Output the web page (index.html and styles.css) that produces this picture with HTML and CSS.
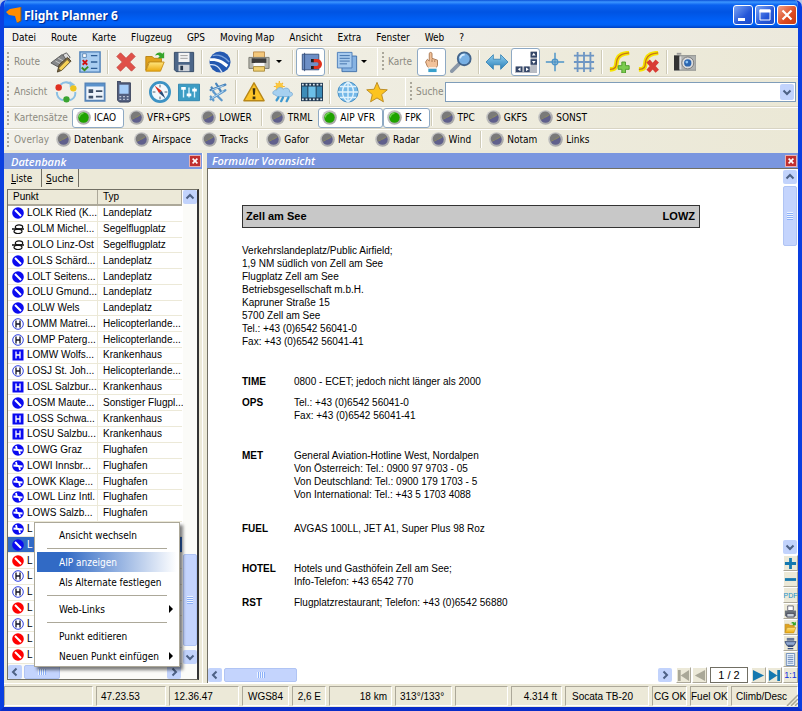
FILE: index.html
```html
<!DOCTYPE html>
<html lang="de">
<head>
    <meta charset="UTF-8">
    <meta name="viewport" content="width=device-width, initial-scale=1.0">
    <title>Flight Planner 6</title>
    <link rel="stylesheet" href="styles.css">
</head>
<body>
    <!-- Shared symbols -->
    <svg class="defs" width="0" height="0" aria-hidden="true">
        <defs>
            <linearGradient id="g-led" x1="0" y1="0" x2="1" y2="1">
                <stop offset="0" stop-color="#cccccc"/><stop offset="1" stop-color="#a0a0a0"/>
            </linearGradient>
            <linearGradient id="g-blue" x1="0" y1="0" x2="0" y2="1">
                <stop offset="0" stop-color="#8fd0f0"/><stop offset="1" stop-color="#2a7fb8"/>
            </linearGradient>
            <linearGradient id="g-yellow" x1="0" y1="0" x2="0" y2="1">
                <stop offset="0" stop-color="#ffe680"/><stop offset="1" stop-color="#eda90c"/>
            </linearGradient>
        </defs>
        <symbol id="led-off" viewBox="0 0 16 16">
            <circle cx="8" cy="8" r="7.8" fill="url(#g-led)"/>
            <circle cx="8" cy="8" r="5.6" fill="#60608c"/>
            <path d="M2.400 9.500A5.600 5.600 0 0 1 12.600 4.800L9 7.600 6 8z" fill="#7a7a7a"/>
            <path d="M3 10l4-2 5.500-3" stroke="#8c8a60" fill="none"/>
        </symbol>
        <symbol id="led-on" viewBox="0 0 16 16">
            <circle cx="8" cy="8" r="7.8" fill="url(#g-led)"/>
            <circle cx="8" cy="8" r="5.6" fill="#1fa300"/>
            <path d="M3.500 8A4.500 4.500 0 0 1 8 3.500" stroke="#6fd050" stroke-width="1.500" fill="none"/>
        </symbol>
        <symbol id="field" viewBox="0 0 12 12">
            <circle cx="6" cy="6" r="5.8" fill="#0a0af0"/>
            <path d="M3 3l6 6" stroke="#fff" stroke-width="2"/>
        </symbol>
        <symbol id="closed" viewBox="0 0 12 12">
            <circle cx="6" cy="6" r="5.8" fill="#f00"/>
            <path d="M3 3l6 6" stroke="#fff" stroke-width="2"/>
        </symbol>
        <symbol id="airport" viewBox="0 0 12 12">
            <circle cx="6" cy="6" r="5.8" fill="#0a0af0"/>
            <path d="M1.500 5.500L5 6 4 2M10.500 6.500L7 6 8 10M5 6h2" stroke="#fff" stroke-width="1.800" fill="none"/>
        </symbol>
        <symbol id="glider" viewBox="0 0 12 12">
            <path d="M0 6h12" stroke="#111" stroke-width="1.300"/>
            <ellipse cx="7" cy="4" rx="3.700" ry="2.200" fill="none" stroke="#111" stroke-width="1.200"/>
            <ellipse cx="6" cy="8.300" rx="4" ry="2.200" fill="none" stroke="#111" stroke-width="1.200"/>
        </symbol>
        <symbol id="heli" viewBox="0 0 12 12">
            <circle cx="6" cy="6" r="5.3" fill="#fff" stroke="#3040e0"/>
            <path d="M4 2.500v7M8 2.500v7M4 6h4" stroke="#112" stroke-width="1.300" fill="none"/>
        </symbol>
        <symbol id="hospital" viewBox="0 0 12 12">
            <path d="M0.500 0.500h11v11h-11z" fill="#0a0af0"/>
            <path d="M4 2.500v7M8 2.500v7M4 6h4" stroke="#fff" stroke-width="1.300" fill="none"/>
        </symbol>
        <symbol id="chev-left" viewBox="0 0 10 10"><path d="M6.500 1.500L3 5l3.500 3.500" fill="none" stroke="#4d6185" stroke-width="2"/></symbol>
        <symbol id="chev-right" viewBox="0 0 10 10"><path d="M3.500 1.500L7 5 3.500 8.500" fill="none" stroke="#4d6185" stroke-width="2"/></symbol>
        <symbol id="chev-up" viewBox="0 0 10 10"><path d="M1.500 6.500L5 3l3.500 3.500" fill="none" stroke="#4d6185" stroke-width="2"/></symbol>
        <symbol id="chev-down" viewBox="0 0 10 10"><path d="M1.500 3.500L5 7l3.500-3.500" fill="none" stroke="#4d6185" stroke-width="2"/></symbol>
        <symbol id="cross" viewBox="0 0 10 10"><path d="M2 2l6 6M8 2L2 8" fill="none" stroke="#fff" stroke-width="2"/></symbol>
        <symbol id="folder" viewBox="0 0 24 24">
            <path d="M2 6h7l2 2h8v4H5l-3 9z" fill="#e0a21c" stroke="#b98212"/>
            <path d="M6 12h16l-4 10H2z" fill="url(#g-yellow)" stroke="#c89018"/>
            <path d="M12 5c2-4 6-4 8-2l2-2v7h-7l2-2c-1-2-3-2-5-1z" fill="#36a52c"/>
        </symbol>
    </svg>

    <div class="window">
        <header class="titlebar">
            <svg class="app-logo" viewBox="0 0 16 16"><path d="M0 5L4 2 15 0V14L11 16 9 9 3 8z" fill="#ff8c00"/><path d="M15 0V14L11 16" fill="none" stroke="#7a5a30"/></svg>
            <h1>Flight Planner 6</h1>
            <button class="win-button" aria-label="Minimieren"><svg viewBox="0 0 18 18"><path d="M4 12h7v3H4z" fill="#fff"/></svg></button>
            <button class="win-button" aria-label="Maximieren"><svg viewBox="0 0 18 18"><path d="M4 4h10v10H4z" fill="none" stroke="#fff"/><path d="M3.500 3.500h11v3h-11z" fill="#fff"/></svg></button>
            <button class="win-button close" aria-label="Schließen"><svg viewBox="0 0 18 18"><path d="M4.500 4.500l9 9M13.500 4.500l-9 9" stroke="#fff" stroke-width="2.200"/></svg></button>
        </header>

        <nav class="menubar">
            <button>Datei</button>
            <button>Route</button>
            <button>Karte</button>
            <button>Flugzeug</button>
            <button>GPS</button>
            <button>Moving Map</button>
            <button>Ansicht</button>
            <button>Extra</button>
            <button>Fenster</button>
            <button>Web</button>
            <button>?</button>
        </nav>

        <div class="toolbar-row tall">
            <div class="toolbar first route">
                <span class="grip"></span><span class="label">Route</span>
                <button class="tool" aria-label="Route bearbeiten"><svg viewBox="0 0 24 24"><path d="M1 13L13 4l6 3-9 11z" fill="#86888a" stroke="#555"/><path d="M6 11l6 3M9 8l6 3" stroke="#ccc"/><path d="M14 4l4-2 4 5-4 3z" fill="#ddd" stroke="#555"/><path d="M8 23l2-8 9-8 4 4-10 10z" fill="#7b6840" stroke="#4c3f26"/><path d="M11 20l9-9" stroke="#f6d256" stroke-width="3.500"/></svg></button>
                <button class="tool" aria-label="Checkliste"><svg viewBox="0 0 24 24"><path d="M1 1h22v22H1z" fill="#a9cdf0" stroke="#4b7fb8" stroke-width="1.500"/><path d="M4 3h4v4H4z" fill="#fff" stroke="#5a86b4"/><path d="M4 10l5 5M9 10l-5 5" stroke="#d01010" stroke-width="2"/><path d="M3 18l3 3 4-4" stroke="#3a8a20" stroke-width="2" fill="none"/><path d="M13 5h7M13 12h7M13 19h7" stroke="#2e5d94" stroke-width="1.500"/></svg></button>
                <span class="sep"></span>
                <button class="tool" aria-label="Löschen"><svg viewBox="0 0 24 24"><path d="M6 2l6 6 6-6 4 4-6 6 6 6-4 4-6-6-6 6-4-4 6-6-6-6z" fill="#e05048" stroke="#c8524a"/></svg></button>
                <button class="tool" aria-label="Öffnen"><svg viewBox="0 0 24 24"><use href="#folder"/></svg></button>
                <button class="tool" aria-label="Speichern"><svg viewBox="0 0 24 24"><path d="M1.500 1.500h21v21h-19l-2-2z" fill="#4c6688" stroke="#2f4562"/><path d="M6 2h12v10H6z" fill="#f4f4f4"/><path d="M8 5h8M8 8h8" stroke="#999"/><path d="M6 15h12v7H6z" fill="#d0d4da"/><path d="M8 16h3v5H8z" fill="#26364c"/></svg></button>
                <span class="sep"></span>
                <button class="tool" aria-label="Google Earth"><svg viewBox="0 0 24 24"><circle cx="12" cy="12" r="11.500" fill="#2458b0"/><path d="M1 8c7-1 15 2 20 7l-2 3C14 13 8 10 1 11z" fill="#fff"/><path d="M4 5c7-2 14 2 18 7" stroke="#7ea4dc" stroke-width="1.500" fill="none"/><path d="M1 15c6-1 10 2 13 8" stroke="#d4e2f6" stroke-width="1.500" fill="none"/></svg></button>
                <span class="sep"></span>
                <button class="tool drop" aria-label="Drucken"><svg viewBox="0 0 24 24"><path d="M6 1h12v8H6z" fill="#f3c77a" stroke="#b98a4a"/><path d="M1 7h22v12H1z" fill="#b6b6ae" stroke="#77776f"/><path d="M4 8h16v5H4z" fill="#3c3c3c"/><path d="M6 13h12v4H6z" fill="#f8f8f8"/><path d="M6 17h12v5H6z" fill="#f2d070" stroke="#a98a3a"/></svg><span class="arrow"></span></button>
                <span class="sep"></span>
                <button class="tool on" aria-label="Fangmodus"><svg viewBox="0 0 24 24"><path d="M2.500 3.500h18v17h-18z" fill="#6d8fc6" stroke="#334e7c"/><path d="M5 2v20" stroke="#334e7c"/><path d="M14 10.500h4.500a3.700 3.700 0 0 1 0 7.500H14" fill="none" stroke="#e0301c" stroke-width="3.500"/><path d="M12 10.500h3M12 18h3" stroke="#222" stroke-width="3.500"/></svg></button>
                <span class="sep"></span>
                <button class="tool drop pages" aria-label="Dokumente"><svg viewBox="0 0 24 24"><path d="M6.500 5.500h16v17h-16z" fill="#87b3e2" stroke="#3e6ea8"/><path d="M1.500 1.500h16v17h-16z" fill="#a8cbee" stroke="#4a7cb8"/><path d="M4 5h11M4 8h11M4 11h11M4 14h8" stroke="#3e6ea8"/></svg><span class="arrow"></span></button>
            </div>
            <div class="toolbar">
                <span class="grip"></span><span class="label">Karte</span>
                <button class="tool on" aria-label="Verschieben"><svg viewBox="0 0 24 24"><path d="M7 17L5 12l2-3 2 2V3c0-2 3-2 3 0v5l6 2v6l-2 3H9z" fill="#f2c29a" stroke="#a97650"/><path d="M12 9v3M15 10v2" stroke="#a97650"/><path d="M8 19h9v4H8z" fill="#38a0cc"/><path d="M8 18.500h9" stroke="#fff" stroke-width="1.500"/></svg></button>
                <button class="tool" aria-label="Zoom"><svg viewBox="0 0 24 24"><path d="M2 22l8-8" stroke="#8b98a8" stroke-width="4" stroke-linecap="round"/><circle cx="15.500" cy="8.500" r="7" fill="#78b0e4" stroke="#43658c" stroke-width="2"/><path d="M11 8a5 5 0 0 1 5-4" stroke="#d6ecff" stroke-width="2" fill="none"/></svg></button>
                <span class="sep"></span>
                <button class="tool" aria-label="Breite"><svg viewBox="0 0 24 24"><path d="M0 12l8-8v5h8V4l8 8-8 8v-5H8v5z" fill="url(#g-blue)" stroke="#3c88b8"/></svg></button>
                <button class="tool on" aria-label="Rollbalken"><svg viewBox="0 0 24 24"><path d="M17 0h7v24H0v-7h17z" fill="#b8bcc4"/><path d="M17 1h7v6h-7zM17 9h7v6h-7zM1 17h7v6H1zM10 17h6v6h-6z" fill="#344668"/><path d="M18.500 5l2-3 2 3zM18.500 11l2 3 2-3zM6 18l-3 2 3 2zM12 18l3 2-3 2z" fill="#fff"/></svg></button>
                <button class="tool" aria-label="Zentrieren"><svg viewBox="0 0 24 24"><path d="M12 2v20M2 12h20" stroke="#4c94c8" stroke-width="1.600"/><circle cx="12" cy="12" r="3" fill="none" stroke="#4c94c8" stroke-width="1.600"/></svg></button>
                <button class="tool" aria-label="Raster"><svg viewBox="0 0 24 24"><path d="M5 1v22M12 1v22M19 1v22M1 5h22M1 12h22M1 19h22" stroke="#6e96c4" stroke-width="2"/></svg></button>
                <span class="sep"></span>
                <button class="tool" aria-label="Strecke hinzufügen"><svg viewBox="0 0 24 24"><path d="M1 20c9 0 6-6 8-11s6-6 13-7" fill="none" stroke="#f6e400" stroke-width="5"/><path d="M1 20c9 0 6-6 8-11s6-6 13-7" fill="none" stroke="#c87818" stroke-width="1.500"/><path d="M14 12h4v4h4v4h-4v4h-4v-4h-4v-4h4z" fill="#7ccc50" stroke="#4a9828"/></svg></button>
                <button class="tool" aria-label="Strecke löschen"><svg viewBox="0 0 24 24"><path d="M1 20c9 0 6-6 8-11s6-6 13-7" fill="none" stroke="#f6e400" stroke-width="5"/><path d="M1 20c9 0 6-6 8-11s6-6 13-7" fill="none" stroke="#c87818" stroke-width="1.500"/><path d="M11 11l10 11M21 11L11 22" stroke="#d83c34" stroke-width="5"/></svg></button>
                <span class="sep"></span>
                <button class="tool" aria-label="Bildschirmfoto"><svg viewBox="0 0 24 24"><path d="M0 5h24v16H0z" fill="#b0b2b0" stroke="#8e908e"/><path d="M0 5h6v16H0z" fill="#333"/><path d="M3 2h5v2H3z" fill="#999"/><path d="M7 6v14" stroke="#ddd" stroke-width="2"/><circle cx="15" cy="13" r="6.500" fill="#dcdcdc" stroke="#777"/><circle cx="15" cy="13" r="4" fill="#2c66b0"/><circle cx="14" cy="12" r="1.500" fill="#8cc4f4"/></svg></button>
            </div>
        </div>

        <div class="toolbar-row tall">
            <div class="toolbar first ansicht">
                <span class="grip"></span><span class="label">Ansicht</span>
                <button class="tool" aria-label="Aktualisieren"><svg viewBox="0 0 24 24"><path d="M6 4c4-4 10-3 13 1M22 12c1 5-3 8-6 9M9 21c-5-1-7-4-7-9" fill="none" stroke="#8cc0e4" stroke-width="2.200"/><path d="M16 0v7l6-3z" fill="#8cc0e4"/><circle cx="4" cy="7" r="3.500" fill="#e03020"/><circle cx="20" cy="8" r="3.500" fill="#ecc420"/><circle cx="12.500" cy="20" r="3.500" fill="#3aa430"/></svg></button>
                <button class="tool" aria-label="Formular"><svg viewBox="0 0 24 24"><path d="M1.500 2.500h21v19h-21z" fill="#eef4fb" stroke="#5684b8" stroke-width="2"/><path d="M2 3h20v3H2z" fill="#5a92cc"/><path d="M5 9h5v4H5zM5 16h5v3H5z" fill="#3c4f68"/><path d="M13 11h7M13 17h7" stroke="#3c4f68" stroke-width="2"/></svg></button>
                <button class="tool" aria-label="Mobilgerät"><svg viewBox="0 0 24 24"><path d="M5 0h3v2h11v20l-2 1H7l-2-2z" fill="#536080" stroke="#343e58"/><path d="M7 4h10v10H7z" fill="#a4ccf8"/><path d="M7 17h10M7 20h10" stroke="#c0c8d8" stroke-dasharray="2 2" stroke-width="1.500"/></svg></button>
                <span class="sep"></span>
                <button class="tool" aria-label="Kompass"><svg viewBox="0 0 24 24"><circle cx="12" cy="12" r="10.500" fill="#f4f8fc" stroke="#3c92c4" stroke-width="3"/><path d="M12 4v3M12 17v3M4 12h3M17 12h3" stroke="#456"/><path d="M6 5l8 6-3 2z" fill="#d8281c"/><path d="M18 19l-4-8-3 2z" fill="#274c78"/></svg></button>
                <button class="tool" aria-label="Einstellungen"><svg viewBox="0 0 24 24"><path d="M0.500 3.500h23v18h-23z" fill="#3c9cc4" stroke="#2c82ac"/><path d="M6 7v11M12 7v11M18 7v11" stroke="#d8f0fc" stroke-width="1.500"/><path d="M3.500 8h5M9.500 15h5M15.500 10h5" stroke="#fff" stroke-width="3"/></svg></button>
                <button class="tool" aria-label="Flugzeuge"><svg viewBox="0 0 24 24"><path d="M4 10l16-6M10 3l5 8M5 7l2 4" stroke="#4a86be" stroke-width="2.500" stroke-linecap="round"/><path d="M4 20L20 10M7 12l9 9M4 17l3 4" stroke="#5c98cc" stroke-width="2.500" stroke-linecap="round"/><path d="M5 10l13-5M5 19l13-8" stroke="#c8e2f4"/></svg></button>
                <span class="sep"></span>
                <button class="tool" aria-label="Warnungen"><svg viewBox="0 0 24 24"><path d="M12 2l11 19.500H1z" fill="#fcc428" stroke="#b88818" stroke-linejoin="round" stroke-width="1.500"/><path d="M10.500 8h3l-.5 7h-2zM10.500 17h3v3h-3z" fill="#3c3010"/></svg></button>
                <button class="tool" aria-label="Wetter"><svg viewBox="0 0 24 24"><path d="M8 0v12M2 6h12M4 2l8 8M12 2L4 10" stroke="#f4b430" stroke-width="1.300"/><circle cx="8" cy="6" r="4" fill="#fcc840"/><path d="M3 15c-3 0-3-5 2-5 1-4 7-3 7-1 4-3 8 0 7 3 5 0 4 5 0 5H6z" fill="#a6d0f0" stroke="#80b0d8"/><path d="M7 18l-2 3M12 18l-2 4M18 18l-2 4" stroke="#3c98d0" stroke-width="2.500" stroke-linecap="round"/></svg></button>
                <button class="tool" aria-label="Film"><svg viewBox="0 0 24 24"><path d="M0 2h24v20H0z" fill="#203850"/><path d="M1 6h6v12H1zM17 6h6v12h-6z" fill="#3c8cb8"/><path d="M8 6h8v12H8z" fill="#6cc0e8"/><path d="M1 4h22M1 20h22" stroke="#dce8f0" stroke-width="2" stroke-dasharray="2 2"/></svg></button>
                <span class="sep"></span>
                <button class="tool" aria-label="Internet"><svg viewBox="0 0 24 24"><circle cx="12" cy="12" r="11" fill="#74b8e8" stroke="#3c88c0"/><path d="M12 1v22M1 12h22M3 6h18M3 18h18M12 1c-8 6-8 16 0 22M12 1c8 6 8 16 0 22" fill="none" stroke="#e0f2fc" stroke-width="1.500"/></svg></button>
                <button class="tool" aria-label="Favoriten"><svg viewBox="0 0 24 24"><path d="M12 1.500l3.200 7.500 8 .6-6.100 5.200 1.900 7.900L12 18.500l-7 4.200 1.900-7.900L.8 9.600l8-.6z" fill="#fcc420" stroke="#b88820"/></svg></button>
            </div>
            <div class="toolbar grow">
                <span class="grip"></span><label class="label" for="suche">Suche</label>
                <div class="combo">
                    <select id="suche"><option></option></select>
                    <span class="combo-arrow"><svg viewBox="0 0 10 10"><use href="#chev-down"/></svg></span>
                </div>
            </div>
        </div>

        <div class="toolbar-row">
            <div class="toolbar first kartensaetze">
                <span class="grip"></span><span class="label">Kartensätze</span>
                <button class="toggle on"><svg><use href="#led-on"/></svg>ICAO</button>
                <button class="toggle"><svg><use href="#led-off"/></svg>VFR+GPS</button>
                <button class="toggle"><svg><use href="#led-off"/></svg>LOWER</button>
                <span class="sep"></span>
                <button class="toggle"><svg><use href="#led-off"/></svg>TRML</button>
                <button class="toggle on"><svg><use href="#led-on"/></svg>AIP VFR</button>
                <button class="toggle on"><svg><use href="#led-on"/></svg>FPK</button>
                <span class="sep"></span>
                <button class="toggle"><svg><use href="#led-off"/></svg>TPC</button>
                <button class="toggle"><svg><use href="#led-off"/></svg>GKFS</button>
                <button class="toggle"><svg><use href="#led-off"/></svg>SONST</button>
            </div>
        </div>

        <div class="toolbar-row">
            <div class="toolbar first overlay">
                <span class="grip"></span><span class="label">Overlay</span>
                <button class="toggle"><svg><use href="#led-off"/></svg>Datenbank</button>
                <button class="toggle"><svg><use href="#led-off"/></svg>Airspace</button>
                <button class="toggle"><svg><use href="#led-off"/></svg>Tracks</button>
                <span class="sep"></span>
                <button class="toggle"><svg><use href="#led-off"/></svg>Gafor</button>
                <button class="toggle"><svg><use href="#led-off"/></svg>Metar</button>
                <button class="toggle"><svg><use href="#led-off"/></svg>Radar</button>
                <button class="toggle"><svg><use href="#led-off"/></svg>Wind</button>
                <span class="sep"></span>
                <button class="toggle"><svg><use href="#led-off"/></svg>Notam</button>
                <button class="toggle"><svg><use href="#led-off"/></svg>Links</button>
            </div>
        </div>

        <main class="workspace">
            <section class="database">
                <div class="panel-title">
                    <h2>Datenbank</h2>
                    <button class="panel-close" aria-label="Schließen"><svg viewBox="0 0 10 10"><use href="#cross"/></svg></button>
                </div>
                <div class="tabs">
                    <button class="tab active"><u>L</u>iste</button>
                    <button class="tab"><u>S</u>uche</button>
                </div>
                <div class="list-frame">
                    <div class="list-main">
                        <table class="points">
                            <thead>
                                <tr><th class="col-point">Punkt</th><th>Typ</th></tr>
                            </thead>
                            <tbody>
                                <tr><td><svg><use href="#field"/></svg>LOLK Ried (K...</td><td>Landeplatz</td></tr>
                                <tr><td><svg><use href="#glider"/></svg>LOLM Michel...</td><td>Segelflugplatz</td></tr>
                                <tr><td><svg><use href="#glider"/></svg>LOLO Linz-Ost</td><td>Segelflugplatz</td></tr>
                                <tr><td><svg><use href="#field"/></svg>LOLS Schärd...</td><td>Landeplatz</td></tr>
                                <tr><td><svg><use href="#field"/></svg>LOLT Seitens...</td><td>Landeplatz</td></tr>
                                <tr><td><svg><use href="#field"/></svg>LOLU Gmund...</td><td>Landeplatz</td></tr>
                                <tr><td><svg><use href="#field"/></svg>LOLW Wels</td><td>Landeplatz</td></tr>
                                <tr><td><svg><use href="#heli"/></svg>LOMM Matrei...</td><td>Helicopterlande...</td></tr>
                                <tr><td><svg><use href="#heli"/></svg>LOMP Paterg...</td><td>Helicopterlande...</td></tr>
                                <tr><td><svg><use href="#hospital"/></svg>LOMW Wolfs...</td><td>Krankenhaus</td></tr>
                                <tr><td><svg><use href="#heli"/></svg>LOSJ St. Joh...</td><td>Helicopterlande...</td></tr>
                                <tr><td><svg><use href="#hospital"/></svg>LOSL Salzbur...</td><td>Krankenhaus</td></tr>
                                <tr><td><svg><use href="#field"/></svg>LOSM Maute...</td><td>Sonstiger Flugpl...</td></tr>
                                <tr><td><svg><use href="#hospital"/></svg>LOSS Schwa...</td><td>Krankenhaus</td></tr>
                                <tr><td><svg><use href="#hospital"/></svg>LOSU Salzbu...</td><td>Krankenhaus</td></tr>
                                <tr><td><svg><use href="#airport"/></svg>LOWG Graz</td><td>Flughafen</td></tr>
                                <tr><td><svg><use href="#airport"/></svg>LOWI Innsbr...</td><td>Flughafen</td></tr>
                                <tr><td><svg><use href="#airport"/></svg>LOWK Klage...</td><td>Flughafen</td></tr>
                                <tr><td><svg><use href="#airport"/></svg>LOWL Linz Intl.</td><td>Flughafen</td></tr>
                                <tr><td><svg><use href="#airport"/></svg>LOWS Salzb...</td><td>Flughafen</td></tr>
                                <tr><td><svg><use href="#airport"/></svg>L</td><td></td></tr>
                                <tr class="selected"><td><svg><use href="#field"/></svg>L</td><td></td></tr>
                                <tr><td><svg><use href="#closed"/></svg>L</td><td></td></tr>
                                <tr><td><svg><use href="#heli"/></svg>L</td><td></td></tr>
                                <tr><td><svg><use href="#heli"/></svg>L</td><td></td></tr>
                                <tr><td><svg><use href="#closed"/></svg>L</td><td></td></tr>
                                <tr><td><svg><use href="#heli"/></svg>L</td><td></td></tr>
                                <tr><td><svg><use href="#closed"/></svg>L</td><td></td></tr>
                                <tr><td><svg><use href="#closed"/></svg>L</td><td></td></tr>
                            </tbody>
                        </table>
                        <div class="scroll-v list-scroll">
                            <button class="scroll-button" aria-label="Nach oben"><svg><use href="#chev-up"/></svg></button>
                            <div class="scroll-thumb"></div>
                            <button class="scroll-button" aria-label="Nach unten"><svg><use href="#chev-down"/></svg></button>
                        </div>
                    </div>
                    <div class="scroll-h list-bottom">
                        <button class="scroll-button" aria-label="Nach links"><svg><use href="#chev-left"/></svg></button>
                        <div class="scroll-thumb"></div>
                        <button class="scroll-button end" aria-label="Nach rechts"><svg><use href="#chev-right"/></svg></button>
                    </div>
                </div>
            </section>

            <section class="preview">
                <div class="panel-title">
                    <h2>Formular Voransicht</h2>
                    <button class="panel-close" aria-label="Schließen"><svg viewBox="0 0 10 10"><use href="#cross"/></svg></button>
                </div>
                <div class="preview-body">
                    <div class="page-column">
                        <article class="page">
                            <div class="page-head"><span>Zell am See</span><span>LOWZ</span></div>
                            <p class="address">Verkehrslandeplatz/Public Airfield;<br>1,9 NM südlich von Zell am See<br>Flugplatz Zell am See<br>Betriebsgesellschaft m.b.H.<br>Kapruner Straße 15<br>5700 Zell am See<br>Tel.: +43 (0)6542 56041-0<br>Fax: +43 (0)6542 56041-41</p>
                            <dl>
                                <div><dt>TIME</dt><dd>0800 - ECET; jedoch nicht länger als 2000</dd></div>
                                <div class="near"><dt>OPS</dt><dd>Tel.: +43 (0)6542 56041-0<br>Fax: +43 (0)6542 56041-41</dd></div>
                                <div><dt>MET</dt><dd>General Aviation-Hotline West, Nordalpen<br>Von Österreich: Tel.: 0900 97 9703 - 05<br>Von Deutschland: Tel.: 0900 179 1703 - 5<br>Von International: Tel.: +43 5 1703 4088</dd></div>
                                <div class="fuel"><dt>FUEL</dt><dd>AVGAS 100LL, JET A1, Super Plus 98 Roz</dd></div>
                                <div><dt>HOTEL</dt><dd>Hotels und Gasthöfein Zell am See;<br>Info-Telefon: +43 6542 770</dd></div>
                                <div class="near"><dt>RST</dt><dd>Flugplatzrestaurant; Telefon: +43 (0)6542 56880</dd></div>
                            </dl>
                        </article>
                        <div class="page-bottom">
                            <div class="scroll-h">
                                <button class="scroll-button" aria-label="Nach links"><svg><use href="#chev-left"/></svg></button>
                                <div class="scroll-thumb"></div>
                                <button class="scroll-button end" aria-label="Nach rechts"><svg><use href="#chev-right"/></svg></button>
                            </div>
                            <button class="mini" aria-label="Erste Seite"><svg viewBox="0 0 14 14"><path d="M1 1h3v12H1zM13 1v12L4 7z" fill="#aaa898"/></svg></button>
                            <button class="mini" aria-label="Vorige Seite"><svg viewBox="0 0 14 14"><path d="M13 1v12L2 7z" fill="#aaa898"/></svg></button>
                            <input class="page-number" type="text" value="1 / 2" aria-label="Seite">
                            <button class="mini" aria-label="Nächste Seite"><svg viewBox="0 0 14 14"><path d="M1 1v12l12-6z" fill="#1478b0"/></svg></button>
                            <button class="mini" aria-label="Letzte Seite"><svg viewBox="0 0 14 14"><path d="M1 1v12l9-6zM10 1h3v12h-3z" fill="#1478b0"/></svg></button>
                        </div>
                    </div>
                    <div class="side-column">
                        <div class="scroll-v">
                            <button class="scroll-button" aria-label="Nach oben"><svg><use href="#chev-up"/></svg></button>
                            <div class="scroll-thumb"></div>
                            <button class="scroll-button" aria-label="Nach unten"><svg><use href="#chev-down"/></svg></button>
                        </div>
                        <button class="mini" aria-label="Vergrößern"><svg viewBox="0 0 14 14"><path d="M7 1v12M1 7h12" stroke="#1478b0" stroke-width="3"/></svg></button>
                        <button class="mini" aria-label="Verkleinern"><svg viewBox="0 0 14 14"><path d="M1 7h12" stroke="#1478b0" stroke-width="3"/></svg></button>
                        <button class="mini pdf">PDF</button>
                        <button class="mini" aria-label="Drucken"><svg viewBox="0 0 14 14"><path d="M4 1h6v5H4z" fill="#fff" stroke="#667"/><path d="M1 6h12v6H1z" fill="#6c747c"/><path d="M3 9h8v4H3z" fill="#c8d0d8" stroke="#445"/></svg></button>
                        <button class="mini" aria-label="Öffnen"><svg viewBox="0 0 14 14"><use href="#folder"/></svg></button>
                        <button class="mini" aria-label="Seitenbreite"><svg viewBox="0 0 14 14"><path d="M3 1h8v3H3z" fill="#667898"/><path d="M1 5h12l-2 4H3z" fill="#90a8d0" stroke="#384c78"/><path d="M4 10h6M4 12.500h6" stroke="#384c78" stroke-width="1.500"/></svg></button>
                        <button class="mini" aria-label="Ganze Seite"><svg viewBox="0 0 14 14"><path d="M2.500 .5h9v13h-9z" fill="#eaf2fc" stroke="#6888b8"/><path d="M4 3h6M4 5h6M4 7h6M4 9h6M4 11h6" stroke="#6888b8"/></svg></button>
                        <button class="mini ratio">1:1</button>
                    </div>
                </div>
            </section>
        </main>

        <footer class="statusbar">
            <span class="cell w-blank"></span>
            <span class="cell w-lat">47.23.53</span>
            <span class="cell w-lat">12.36.47</span>
            <span class="cell w-datum">WGS84</span>
            <span class="cell w-var">2,6 E</span>
            <span class="cell w-dist">18 km</span>
            <span class="cell w-course">313°/133°</span>
            <span class="cell w-empty"></span>
            <span class="cell w-alt">4.314 ft</span>
            <span class="cell w-plane">Socata TB-20</span>
            <span class="cell w-cg">CG OK</span>
            <span class="cell w-fuel">Fuel OK</span>
            <span class="cell w-climb">Climb/Desc</span>
            <svg class="size-grip" viewBox="0 0 12 12"><path d="M12 1L1 12M12 5l-7 7M12 9l-3 3" stroke="#a8a594" stroke-width="1.500"/></svg>
        </footer>

        <div class="context-menu" role="menu">
            <button role="menuitem">Ansicht wechseln</button>
            <hr>
            <button role="menuitem" class="hot">AIP anzeigen</button>
            <button role="menuitem">Als Alternate festlegen</button>
            <hr>
            <button role="menuitem" class="sub">Web-Links</button>
            <hr>
            <button role="menuitem">Punkt editieren</button>
            <button role="menuitem" class="sub">Neuen Punkt einfügen</button>
        </div>
    </div>
</body>
</html>
```

FILE: styles.css
```css
* {
    box-sizing: border-box;
}
body {
    margin: 0;
    font-family: "DejaVu Sans Condensed", "DejaVu Sans", sans-serif;
    font-size: 10px;
    color: #000;
    background-color: #b8c8e8;
}
button, input, select {
    font: inherit;
    color: inherit;
    margin: 0;
    padding: 0;
    border: none;
    background: none;
}
h1, h2, p, dl, dd {
    margin: 0;
}
svg {
    display: block;
    flex: none;
}
.defs {
    position: absolute;
}
.window {
    position: relative;
    display: flex;
    flex-direction: column;
    height: 100vh;
    border: 4px solid #0a3fe0;
    border-top: none;
    border-bottom-color: #0a2cc8;
    border-radius: 7px 7px 0 0;
    background-color: #ece9d8;
    overflow: hidden;
}

/* Title bar */
.titlebar {
    display: flex;
    flex: none;
    align-items: center;
    gap: 2px;
    height: 28px;
    margin: 0 -4px;
    padding: 2px 5px 0 6px;
    background: linear-gradient(#0a50d8 0, #3c96ff 2px, #0a62f0 5px, #0054e3 12px, #0062fa 22px, #0060f4 25px, #0040c0 28px);
}
.app-logo {
    width: 16px;
    height: 16px;
}
.titlebar h1 {
    flex: 1;
    font: bold 12px "Noto Sans", sans-serif;
    color: #fff;
    text-shadow: 1px 1px 1px #002a90;
}
.win-button {
    width: 20px;
    height: 20px;
    border: 1px solid #fff;
    border-radius: 3px;
    background: linear-gradient(135deg, #7ba4f4, #2456d8 60%, #1c4cc8);
}
.win-button svg {
    width: 18px;
    height: 18px;
}
.win-button.close {
    background: linear-gradient(135deg, #f0a088, #dc4a20 60%, #c83c14);
}

/* Menu and toolbars */
.menubar {
    display: flex;
    flex: none;
    gap: 15px;
    height: 18px;
    padding-left: 8px;
    background: linear-gradient(90deg, #f4f3f0, #ece9dc);
}
.toolbar-row {
    display: flex;
    flex: none;
    height: 22px;
    border-top: 1px solid #d8d4c4;
    box-shadow: inset 0 1px #fff;
    background: linear-gradient(90deg, #f2f1ea, #ebe8d6);
}
.toolbar-row.tall {
    height: 30px;
}
.toolbar {
    display: flex;
    align-items: center;
    padding-left: 4px;
    border-left: 1px solid #fff;
}
.toolbar.first {
    padding-left: 3px;
    border-left: none;
}
.toolbar.grow {
    flex: 1;
}
.toolbar.route {
    width: 373px;
}
.toolbar.ansicht {
    width: 401px;
}
.grip {
    width: 2px;
    height: 20px;
    margin-right: 4px;
    background: repeating-linear-gradient(#aaa79a 0, #aaa79a 2px, transparent 2px, transparent 4px);
}
.toolbar-row:not(.tall) .grip {
    height: 14px;
}
.label {
    color: #8c8a80;
    width: 28px;
    margin-right: 1px;
    white-space: nowrap;
}
.first .label {
    margin-left: 1px;
    margin-right: 0;
}
.first.route .label {
    width: 32px;
}
.first.ansicht .label {
    width: 37px;
}
.kartensaetze .label {
    width: 58px;
}
.overlay .label {
    width: 37px;
}
.tool {
    display: flex;
    flex: none;
    align-items: center;
    justify-content: center;
    width: 29px;
    height: 28px;
}
.tool svg {
    width: 22px;
    height: 22px;
}
.tool.drop {
    width: 48px;
    gap: 6px;
}
.tool.pages {
    width: 39px;
    gap: 3px;
}
.arrow {
    border: 3px solid transparent;
    border-top-color: #000;
    border-bottom: none;
}
.sep {
    flex: none;
    width: 2px;
    height: 24px;
    margin: 0 2px 0 3px;
    border-left: 1px solid #cfcbb8;
    border-right: 1px solid #fff;
}
.toolbar-row:not(.tall) .sep {
    height: 17px;
}
.toggle {
    display: flex;
    align-items: center;
    gap: 3px;
    height: 20px;
    padding: 0 5px 0 4px;
    border: 1px solid transparent;
}
.toggle.on {
    padding: 0 7px 0 3px;
}
.tool.on, .toggle.on {
    border: 1px solid #8ea9c4;
    border-radius: 3px;
    background-color: #fff;
}
.toggle.on + .sep {
    margin-left: 1px;
}
.toggle svg {
    width: 15px;
    height: 15px;
}
.combo {
    position: relative;
    flex: 1;
    height: 20px;
    margin-right: 2px;
}
.combo select {
    display: block;
    width: 100%;
    height: 20px;
    appearance: none;
    border: 1px solid #7f9db9;
    background-color: #fff;
}
.combo-arrow {
    position: absolute;
    top: 2px;
    right: 2px;
    width: 14px;
    height: 16px;
    padding: 3px 2px;
    border-radius: 2px;
    background-color: #c2d3fc;
    pointer-events: none;
}
.combo-arrow svg {
    width: 10px;
    height: 10px;
}

/* Work area */
.workspace {
    display: flex;
    flex: 1;
    gap: 4px;
    min-height: 0;
    padding-top: 3px;
}
.database {
    display: flex;
    flex-direction: column;
    flex: none;
    width: 199px;
    border-right: 1px solid #fff;
}
.preview {
    display: flex;
    flex-direction: column;
    flex: 1;
    min-width: 0;
}
.panel-title {
    display: flex;
    flex: none;
    align-items: center;
    justify-content: space-between;
    height: 16px;
    padding: 0 1px 0 7px;
    background-color: #7a96df;
}
.preview .panel-title {
    padding-left: 5px;
    border-bottom: 1px solid #716f64;
}
.panel-title h2 {
    font: italic 600 11px/15px "Open Sans", sans-serif;
    color: #fff;
}
.panel-close {
    width: 12px;
    height: 12px;
    padding: 1px;
    border: 1px solid #e8b0b0;
    background-color: #c03030;
}
.panel-close svg {
    width: 8px;
    height: 8px;
}
.tabs {
    display: flex;
    flex: none;
    height: 18px;
    padding-left: 2px;
}
.tab {
    padding: 0 4px;
    border-right: 1px solid #716f64;
    text-align: left;
}
.tab.active {
    width: 36px;
    padding-left: 5px;
}
.list-frame {
    display: flex;
    flex-direction: column;
    flex: 1;
    min-height: 0;
    margin: 2px 3px 3px 3px;
    border: 1px solid #716f64;
    border-right: 2px solid #333;
    background-color: #fff;
}
.list-main {
    display: flex;
    flex: 1;
    min-height: 0;
}
.points {
    flex: 1;
    border-collapse: separate;
    border-spacing: 0;
    table-layout: fixed;
    width: 175px;
    font: 10px/12px "Liberation Sans", Arial, sans-serif;
}
.points th {
    height: 16px;
    padding: 0 5px;
    border-right: 1px solid #aca899;
    border-bottom: 2px solid #aca899;
    background-color: #ece9d8;
    font-weight: normal;
    text-align: left;
}
.points .col-point {
    width: 90px;
}
.points td {
    padding: 0 0 0 5px;
    border-bottom: 1px solid #ece9d8;
    white-space: nowrap;
}
.points td:first-child {
    padding-left: 4px;
    border-right: 1px solid #ece9d8;
}
.points svg {
    float: left;
    width: 12px;
    height: 12px;
    margin-right: 3px;
}
.points .selected td {
    background-color: #316ac5;
    color: #fff;
}

/* Scroll bars */
.scroll-v {
    display: flex;
    flex-direction: column;
    justify-content: space-between;
    width: 14px;
    background-color: #fbfbf8;
}
.scroll-h {
    display: flex;
    height: 16px;
    padding: 1px 0;
    gap: 2px;
    background-color: #fbfbf8;
}
.scroll-button {
    display: flex;
    flex: none;
    align-items: center;
    justify-content: center;
    width: 14px;
    height: 14px;
    border-radius: 2px;
    background-color: #c2d3fc;
}
.scroll-button svg {
    width: 10px;
    height: 10px;
}
.scroll-button.end {
    margin-left: auto;
}
.scroll-thumb {
    border: 1px solid #b0c4f4;
    border-radius: 2px;
    background: repeating-linear-gradient(#eef4fe 0, #eef4fe 1px, #8cb0f8 1px, #8cb0f8 2px) center / 6px 8px no-repeat #c4d4fd;
}
.scroll-h .scroll-thumb {
    width: 36px;
    background: repeating-linear-gradient(90deg, #eef4fe 0, #eef4fe 1px, #8cb0f8 1px, #8cb0f8 2px) center / 8px 6px no-repeat #c4d4fd;
}
.list-scroll {
    width: 14px;
    margin-left: 1px;
}
.list-scroll .scroll-thumb {
    height: 92px;
    margin-top: auto;
    margin-bottom: 4px;
}
.list-bottom {
    height: 15px;
    padding: 1px 16px 0 0;
}

/* Preview page */
.preview-body {
    display: flex;
    flex: 1;
    min-height: 0;
    border-left: 1px solid #716f64;
    background-color: #fff;
}
.page-column {
    display: flex;
    flex-direction: column;
    flex: 1;
    min-width: 0;
}
.page {
    flex: 1;
    padding: 36px 83px 0 34px;
    font: 10px/13px "Liberation Sans", Arial, sans-serif;
}
.page-head {
    display: flex;
    justify-content: space-between;
    padding: 4px 4px 4px 3px;
    border: 1px solid #333;
    background-color: #c8c8c8;
    font-size: 11px;
    font-weight: bold;
}
.address {
    margin-top: 16px;
}
.page dl > div {
    display: flex;
    margin-top: 27px;
}
.page dl > .near {
    margin-top: 8px;
}
.page dl > .fuel {
    margin-top: 21px;
}
.page dt {
    flex: none;
    width: 52px;
    font-weight: bold;
}
.page-bottom {
    display: flex;
    align-items: flex-end;
    gap: 1px;
    padding-right: 1px;
}
.page-bottom .scroll-h {
    flex: 1;
    background-color: #fff;
    margin-right: 3px;
}
.page-bottom .scroll-thumb {
    width: 73px;
}
.page-number {
    width: 38px;
    height: 16px;
    margin: 0 2px;
    border: 1px solid #716f64;
    background-color: #fff;
    font: 11px "Liberation Sans", Arial, sans-serif;
    text-align: center;
}
.side-column {
    display: flex;
    flex-direction: column;
    flex: none;
    width: 15px;
}
.side-column .scroll-v {
    flex: 1;
    padding: 1px 0;
    justify-content: flex-start;
    gap: 2px;
    background-color: #fff;
}
.side-column .scroll-thumb {
    height: 60px;
}
.side-column .scroll-button:last-child {
    margin-top: auto;
}
.mini {
    display: flex;
    flex: none;
    align-items: center;
    justify-content: center;
    width: 15px;
    height: 16px;
    border: 1px solid #fff;
    border-right-color: #aca899;
    border-bottom-color: #aca899;
    background-color: #ece9d8;
    white-space: nowrap;
}
.mini svg {
    width: 13px;
    height: 13px;
}
.mini.pdf {
    font: 7px "Liberation Sans", Arial, sans-serif;
    color: #1890c8;
}
.mini.ratio {
    font: 9px "Liberation Sans", Arial, sans-serif;
    color: #1030e0;
}

/* Status bar */
.statusbar {
    display: flex;
    flex: none;
    gap: 3px;
    position: relative;
    height: 24px;
    padding: 2px 0 1px;
    border-top: 1px solid #fff;
    font: 10px "Liberation Sans", Arial, sans-serif;
}
.cell {
    flex: none;
    padding: 0 4px;
    border: 1px solid #fff;
    border-top-color: #aca899;
    border-left-color: #aca899;
    line-height: 19px;
    white-space: nowrap;
}
.w-blank {
    width: 89px;
}
.w-lat {
    width: 70px;
}
.w-datum {
    width: 47px;
    text-align: center;
}
.w-var {
    width: 34px;
    text-align: right;
}
.w-dist {
    width: 63px;
    text-align: right;
}
.w-course {
    width: 57px;
}
.w-empty {
    width: 53px;
}
.w-alt {
    width: 51px;
    text-align: right;
}
.w-plane {
    width: 84px;
    padding-left: 6px;
}
.w-cg {
    width: 35px;
    padding: 0 1px;
}
.w-fuel {
    width: 38px;
    padding: 0 0;
}
.w-climb {
    flex: 1;
}
.size-grip {
    position: absolute;
    right: 0;
    bottom: 1px;
    width: 12px;
    height: 12px;
}

/* Context menu */
.context-menu {
    position: absolute;
    left: 30px;
    top: 522px;
    display: flex;
    flex-direction: column;
    width: 146px;
    padding: 2px 2px 0;
    border: 1px solid #aca899;
    background-color: #fff;
    box-shadow: 3px 3px 3px rgba(0, 0, 0, 0.5);
}
.context-menu button {
    display: flex;
    align-items: center;
    justify-content: space-between;
    height: 20px;
    padding: 0 4px 0 22px;
    white-space: nowrap;
}
.context-menu .hot {
    background: linear-gradient(90deg, #316ac5 20%, #fff);
    color: #fff;
}
.context-menu .sub::after {
    content: "";
    border: 4px solid transparent;
    border-left-color: #000;
    border-right: none;
}
.context-menu hr {
    width: 120px;
    margin: 3px 0 3px 10px;
    border: none;
    border-top: 1px solid #aca899;
}
```
